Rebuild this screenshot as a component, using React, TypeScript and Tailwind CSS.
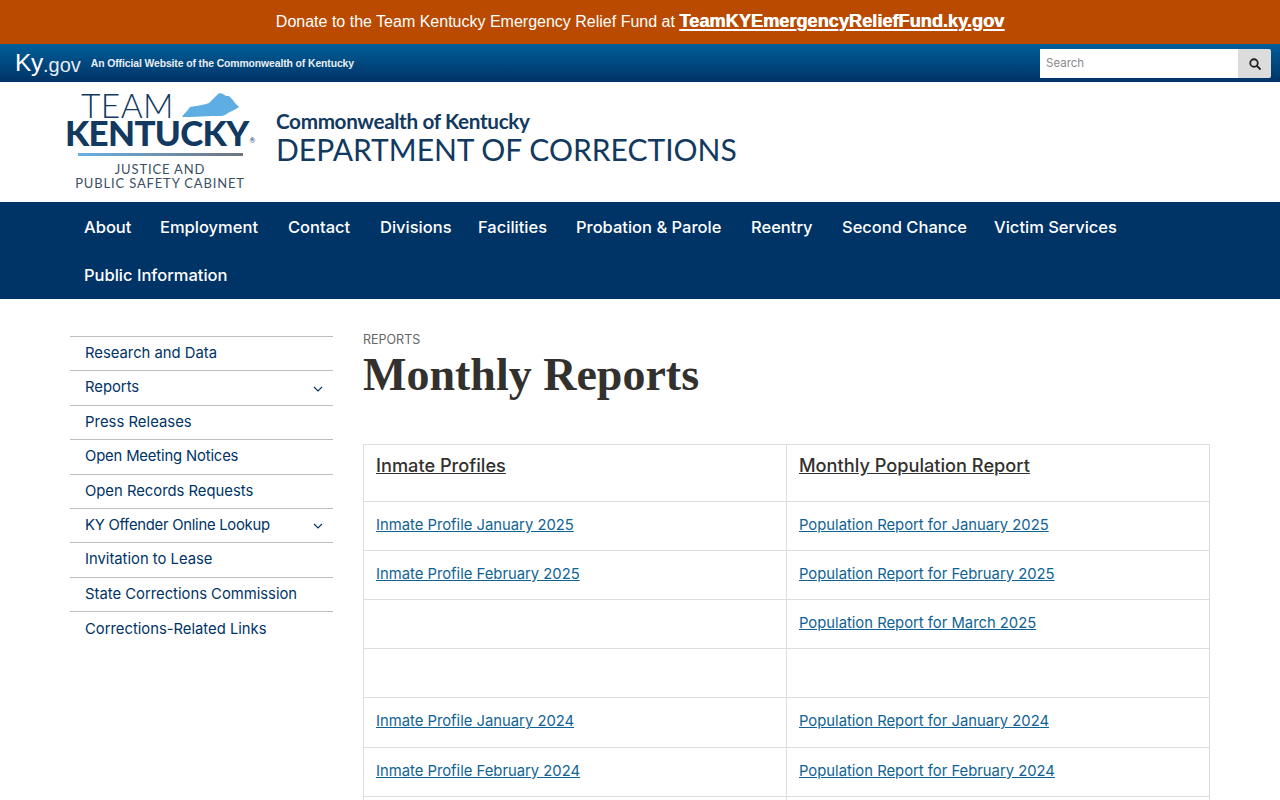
const nav1: [string, string][] = [
  ["About", "w-[76px]"],
  ["Employment", "w-[128px]"],
  ["Contact", "w-[92px]"],
  ["Divisions", "w-[98px]"],
  ["Facilities", "w-[98px]"],
  ["Probation & Parole", "w-[175px]"],
  ["Reentry", "w-[91px]"],
  ["Second Chance", "w-[152px]"],
  ["Victim Services", "w-[150px]"],
];
const side: [string, boolean, string][] = [
  ["Research and Data", false, ""],
  ["Reports", true, ""],
  ["Press Releases", false, "tracking-[0.05px]"],
  ["Open Meeting Notices", false, "tracking-[-0.15px]"],
  ["Open Records Requests", false, ""],
  ["KY Offender Online Lookup", true, "tracking-[-0.25px]"],
  ["Invitation to Lease", false, ""],
  ["State Corrections Commission", false, ""],
  ["Corrections-Related Links", false, ""],
];
const rows: [string, string, string][] = [
  ["Inmate Profile January 2025", "Population Report for January 2025", "h-[49px]"],
  ["Inmate Profile February 2025", "Population Report for February 2025", "h-[49px]"],
  ["", "Population Report for March 2025", "h-[49px]"],
  ["", "", "h-[49px]"],
  ["Inmate Profile January 2024", "Population Report for January 2024", "h-[50px]"],
  ["Inmate Profile February 2024", "Population Report for February 2024", "h-[49px]"],
  ["", "", "h-[49px]"],
];

function Chevron() {
  return (
    <svg width="10" height="6" viewBox="0 0 10 6" fill="none" stroke="#003366" strokeWidth="1.1" className="mr-[10px] mt-[2px]">
      <path d="M1 1l4 4 4-4" />
    </svg>
  );
}

function Logo() {
  return (
    <div className="w-[190px] h-[100px] shrink-0 flex flex-col text-[#12395f] font-['Lato',sans-serif]">
      <div className="w-[190px] h-[27px] flex items-start">
        <span className="ml-[16px] text-[33.5px] leading-[27px] font-light tracking-[0.4px] text-[#12395f]">TEAM</span>
        <svg width="57" height="25" viewBox="0 0 57 25" className="ml-[8px] mt-[1px]">
          <path fill="#5eaee3" d="M0 24L2 21L5 18L8 14L14 13L20 12L24 11L27 10L30 7L33 4L36 1L38 0L41 1L44 3L47 3L50 6L53 10L56 13L57 14L54 16L50 18L46 20L43 22L40 23L30 23L20 23.5L8 24Z" />
        </svg>
      </div>
      <div className="w-[190px] h-[27px] text-[35px] leading-[27px] font-black tracking-[-0.7px] whitespace-nowrap flex">
        KENTUCKY<span className="text-[7px] leading-[7px] self-end mb-[2px] ml-[1px] font-normal">®</span>
      </div>
      <div className="w-[165px] h-[3px] mt-[7px] ml-[13px] bg-gradient-to-r from-[#68b0e3] to-[#6d7480]"></div>
      <div className="text-[13px] leading-[14px] tracking-[0.85px] text-[#3c4f64] mt-[6px] whitespace-nowrap text-center">JUSTICE AND</div>
      <div className="text-[13px] leading-[14px] tracking-[0.85px] text-[#3c4f64] whitespace-nowrap text-center">PUBLIC SAFETY CABINET</div>
    </div>
  );
}

export default function App() {
  return (
    <div className="w-full h-[800px] overflow-hidden bg-white font-['Inter',sans-serif]">
      <div className="h-[44px] bg-[#b94a00] flex items-center justify-center pb-[1px] text-white text-[16px] font-['Liberation_Sans',sans-serif]">
        <span>Donate to the Team Kentucky Emergency Relief Fund at&nbsp;</span>
        <a className="font-bold underline decoration-2 underline-offset-2 text-[18.2px] [text-shadow:0.5px_0_0_#fff]">TeamKYEmergencyReliefFund.ky.gov</a>
      </div>
      <div className="h-[38px] bg-gradient-to-b from-[#005f9a] to-[#003366] flex items-center font-['Liberation_Sans',sans-serif] text-white pl-[15px] pr-[9px]">
        <span className="text-[24.5px] leading-none tracking-[-0.3px]">Ky</span>
        <span className="text-[20px] leading-none mt-[3px] text-[#e6edf3]">.gov</span>
        <span className="text-[10.4px] font-bold ml-[10px] mt-[1px] tracking-[-0.1px] text-[#e8eef3]">An Official Website of the Commonwealth of Kentucky</span>
        <div className="ml-auto flex h-[29px] w-[231px] mt-[1px]">
          <div className="w-[198px] bg-white text-[11.5px] text-[#8b8b8b] font-['Inter',sans-serif] flex items-center pl-[6px]">Search</div>
          <div className="flex-1 bg-[#dcdcdc] rounded-r-[2px] flex items-center justify-center">
            <svg width="12" height="12" viewBox="0 0 24 24" fill="none" stroke="#222" strokeWidth="3.6" strokeLinecap="round">
              <circle cx="10" cy="10" r="7.5" />
              <path d="M16 16l6 6" />
            </svg>
          </div>
        </div>
      </div>
      <div className="h-[120px] flex items-center pl-[65px]">
        <Logo />
        <div className="ml-[21px] mt-[-11px] font-['Lato',sans-serif] text-[#12395f]">
          <div className="text-[20.7px] leading-[24px] font-bold tracking-[-0.35px] mt-[1px]">Commonwealth of Kentucky</div>
          <div className="text-[30px] leading-[32px] font-normal">DEPARTMENT OF CORRECTIONS</div>
        </div>
      </div>
      <div className="h-[97px] bg-[#003366] pl-[70px] text-white text-[16.5px] font-medium">
        <div className="flex h-[49px] items-center pt-[2px]">
          {nav1.map(([n, w]) => (
            <a key={n} className={`${w} pl-[14px] whitespace-nowrap`}>{n}</a>
          ))}
        </div>
        <div className="flex h-[47px] items-center pt-[2px]">
          <a className="pl-[14px] whitespace-nowrap">Public Information</a>
        </div>
      </div>
      <div className="flex pl-[70px] pr-[70px] pt-[37px]">
        <div className="w-[263px] shrink-0 border-t border-[#bdbdbd]">
          {side.map(([s, c, t]) => (
            <div key={s} className="h-[34.4px] border-b border-[#bdbdbd] last:border-b-0 flex items-center justify-between pl-[15px] pb-[1px] text-[14.8px] text-[#003366]">
              <span className={t}>{s}</span>
              {c && <Chevron />}
            </div>
          ))}
        </div>
        <div className="ml-[30px] flex-1 min-w-0 mt-[-4px]">
          <div className="text-[12.5px] leading-[16px] text-[#666]">REPORTS</div>
          <h1 className="text-[46px] leading-[56px] mt-[-1px] font-bold text-[#33312e] font-['Liberation_Serif',serif]">Monthly Reports</h1>
          <div className="mt-[41px] border-t border-l border-[#dddddd] grid grid-cols-2">
            <div className="h-[57px] border-r border-b border-[#dddddd] pl-[12px] pt-[7px] text-[18.2px] font-medium text-[#33312e] underline">Inmate Profiles</div>
            <div className="h-[57px] border-r border-b border-[#dddddd] pl-[12px] pt-[7px] text-[18.2px] font-medium text-[#33312e] underline">Monthly Population Report</div>
            {rows.map(([a, b, h], i) => (
              <div key={i} className="contents">
                <div className={`${h} border-r border-b border-[#dddddd] pl-[12px] pb-[2px] flex items-center text-[14.8px] text-[#0f6394] underline`}>{a}</div>
                <div className={`${h} border-r border-b border-[#dddddd] pl-[12px] pb-[2px] flex items-center text-[14.8px] text-[#0f6394] underline`}>{b}</div>
              </div>
            ))}
          </div>
        </div>
      </div>
    </div>
  );
}
